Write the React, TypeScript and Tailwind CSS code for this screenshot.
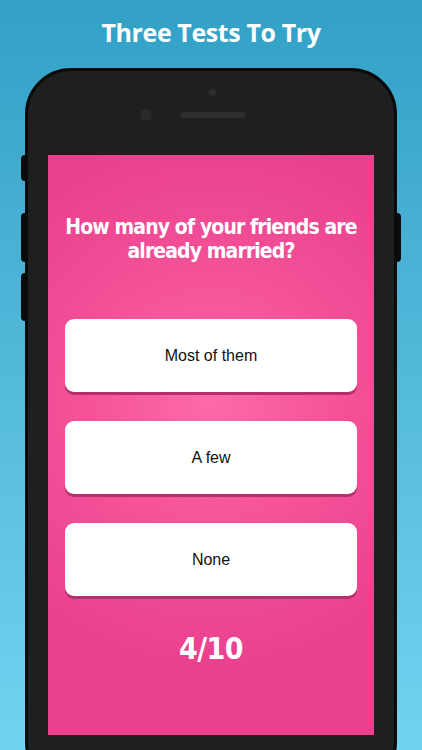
export default function App() {
  const answers = ["Most of them", "A few", "None"];

  return (
    <div className="relative w-[422px] h-[750px] overflow-hidden bg-linear-to-b from-[#32a0c6] to-[#71d3f0]">
      {/* Title */}
      <h1 className="pt-[15px] h-[68px] text-center text-white text-[25px] font-bold leading-[34px] font-['Open_Sans',sans-serif] tracking-[-0.4px]">
        Three Tests To Try
      </h1>

      {/* Phone */}
      <div className="relative ml-[25px] w-[372px] h-[720px]">
        {/* side buttons */}
        <div className="absolute -left-[4px] top-[87px] w-[5px] h-[26px] bg-[#0a0a0a] rounded-l-sm" />
        <div className="absolute -left-[4px] top-[145px] w-[5px] h-[49px] bg-[#0a0a0a] rounded-l-sm" />
        <div className="absolute -left-[4px] top-[205px] w-[5px] h-[48px] bg-[#0a0a0a] rounded-l-sm" />
        <div className="absolute -right-[4px] top-[145px] w-[5px] h-[49px] bg-[#0a0a0a] rounded-r-sm" />

        <div className="h-full rounded-[46px] border-[3px] border-[#0a0a0a] bg-[#1e1f1f] px-[20px] flex flex-col">
          {/* top sensors */}
          <div className="relative h-[84px]">
            <div className="absolute left-[161px] top-[18px] w-[7px] h-[7px] rounded-full bg-[#2d2d2d]" />
            <div className="absolute left-[92px] top-[38px] w-[12px] h-[12px] rounded-full bg-[#2a2a2a]" />
            <div className="absolute left-[132px] top-[41px] w-[66px] h-[6px] rounded-full bg-[#2e2e2e]" />
          </div>

          {/* Screen */}
          <div className="w-[326px] h-[580px] bg-[#ea408e] bg-[radial-gradient(circle_at_50%_43%,#fd6aa9_0%,#f45299_35%,#e93f8d_75%)] flex flex-col items-center">
            <p className="mt-[60px] w-[306px] text-center text-white text-[21px] font-bold leading-[24px] tracking-[-0.9px] font-['DejaVu_Sans_Condensed','DejaVu_Sans',sans-serif]">
              How many of your friends are already married?
            </p>

            <div className="mt-[56px] w-[292px] flex flex-col gap-[29px]">
              {answers.map((a) => (
                <div
                  key={a}
                  className="h-[73px] rounded-[9px] bg-white shadow-[0_3px_0_#b52f6c] flex items-center justify-center text-[16px] text-[#111] font-['Liberation_Sans',Arial,sans-serif]"
                >
                  {a}
                </div>
              ))}
            </div>

            <p className="mt-[35px] text-white text-[30px] font-bold leading-[36px] tracking-[-0.5px] font-['DejaVu_Sans_Condensed','DejaVu_Sans',sans-serif]">
              4/10
            </p>
          </div>
        </div>
      </div>
    </div>
  );
}
